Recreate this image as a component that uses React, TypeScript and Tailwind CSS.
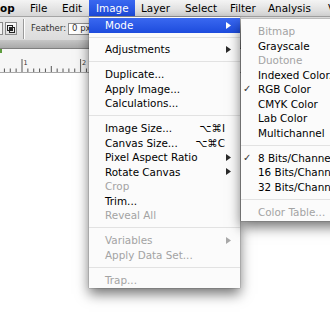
import React from 'react';

type Entry =
  | { sep: true; tall?: boolean }
  | {
      sep?: false;
      label: string;
      disabled?: boolean;
      sub?: boolean;
      shortcut?: string;
      active?: boolean;
      checked?: boolean;
    };

const imageMenu: Entry[] = [
  { label: 'Mode', sub: true, active: true },
  { sep: true },
  { label: 'Adjustments', sub: true },
  { sep: true, tall: true },
  { label: 'Duplicate...' },
  { label: 'Apply Image...' },
  { label: 'Calculations...' },
  { sep: true, tall: true },
  { label: 'Image Size...', shortcut: '⌥⌘I' },
  { label: 'Canvas Size...', shortcut: '⌥⌘C' },
  { label: 'Pixel Aspect Ratio', sub: true },
  { label: 'Rotate Canvas', sub: true },
  { label: 'Crop', disabled: true },
  { label: 'Trim...' },
  { label: 'Reveal All', disabled: true },
  { sep: true, tall: true },
  { label: 'Variables', sub: true, disabled: true },
  { label: 'Apply Data Set...', disabled: true },
  { sep: true, tall: true },
  { label: 'Trap...', disabled: true },
];

const modeMenu: Entry[] = [
  { label: 'Bitmap', disabled: true },
  { label: 'Grayscale' },
  { label: 'Duotone', disabled: true },
  { label: 'Indexed Color...' },
  { label: 'RGB Color', checked: true },
  { label: 'CMYK Color' },
  { label: 'Lab Color' },
  { label: 'Multichannel' },
  { sep: true, tall: true },
  { label: '8 Bits/Channel', checked: true },
  { label: '16 Bits/Channel' },
  { label: '32 Bits/Channel' },
  { sep: true, tall: true },
  { label: 'Color Table...', disabled: true },
];

const menuBar = [
  { label: 'op', box: 'w-[23px] pl-0 font-bold' },
  { label: 'File', box: 'w-[32px] pl-[7px]' },
  { label: 'Edit', box: 'w-[34px] pl-[7px]' },
  { label: 'Image', box: 'w-[46px] pl-[7px]', active: true },
  { label: 'Layer', box: 'w-[43px] pl-[6px]' },
  { label: 'Select', box: 'w-[45px] pl-[7px]' },
  { label: 'Filter', box: 'w-[38px] pl-[7px]' },
  { label: 'Analysis', box: 'w-[60px] pl-[7px]' },
  { label: 'View', box: 'w-[40px] pl-[7px]' },
];

function Arrow({ color }: { color: string }) {
  return (
    <svg width="5" height="7" viewBox="0 0 5 7" className="shrink-0">
      <path d="M0 0L5 3.5L0 7Z" fill={color} />
    </svg>
  );
}

function Separator({ tall }: { tall?: boolean }) {
  return (
    <div className={`flex items-center ${tall ? 'h-[10.5px]' : 'h-[9.5px]'}`}>
      <div className="h-px w-full bg-[#e2e2e2]" />
    </div>
  );
}

function ImageMenu() {
  return (
    <div className="absolute left-[89px] top-[17px] w-[151px] bg-[#fbfbfb] pt-px pb-px shadow-[0_6px_12px_rgba(0,0,0,0.55),0_0_1px_rgba(0,0,0,0.6)]">
      {imageMenu.map((e, i) =>
        e.sep ? (
          <Separator key={i} tall={e.tall} />
        ) : (
          <div
            key={i}
            className={`flex h-[14.5px] items-center pl-[16px] pr-[9px] ${
              e.active
                ? 'bg-gradient-to-b from-[#3a68f0] to-[#1d4bdd] text-white'
                : e.disabled
                  ? 'text-[#a3a3a3]'
                  : 'text-black'
            }`}
          >
            <span className="flex-1 whitespace-nowrap">{e.label}</span>
            {e.shortcut && <span className="mr-[6px] whitespace-nowrap">{e.shortcut}</span>}
            {e.sub && <Arrow color={e.active ? '#ffffff' : e.disabled ? '#a8a8a8' : '#2a2a2a'} />}
          </div>
        ),
      )}
    </div>
  );
}

function ModeMenu() {
  return (
    <div className="absolute left-[241px] top-[19px] w-[110px] bg-[#fbfbfb] pt-[5px] pb-[2px] shadow-[0_6px_12px_rgba(0,0,0,0.55),0_0_1px_rgba(0,0,0,0.6)]">
      {modeMenu.map((e, i) =>
        e.sep ? (
          <Separator key={i} tall={e.tall} />
        ) : (
          <div
            key={i}
            className={`flex h-[14.5px] items-center pl-[2px] ${
              e.disabled ? 'text-[#a3a3a3]' : 'text-black'
            }`}
          >
            <span className="w-[15px] text-[10px] text-[#333]">{e.checked ? '✓' : ''}</span>
            <span className="whitespace-nowrap">{e.label}</span>
          </div>
        ),
      )}
    </div>
  );
}

function Ruler() {
  const ticks = [];
  const step = 5.86;
  for (let i = -3; i <= 14; i++) {
    const x = 22 + i * step;
    const major = i % 10 === 0;
    const half = Math.abs(i % 10) === 5;
    const len = major ? 13 : half ? 6 : 3.5;
    ticks.push(
      <line key={i} x1={x} x2={x} y1={23 - len} y2={23} stroke="#555" strokeWidth="1" />,
    );
  }
  return (
    <div className="h-[24px] border-b border-[#a8a8a8] bg-[#f6f6f6]">
      <svg width="330" height="24" viewBox="0 0 330 24">
        {ticks}
        <text x="23.5" y="16" fontSize="6.5" fill="#333" fontFamily="DejaVu Sans">1</text>
        <text x="82" y="16" fontSize="6.5" fill="#333" fontFamily="DejaVu Sans">2</text>
      </svg>
    </div>
  );
}

export default function App() {
  return (
    <div className="relative h-[330px] w-[330px] overflow-hidden bg-white font-['DejaVu_Sans',sans-serif] text-[10.4px] leading-none">
      {/* menu bar */}
      <div className="flex h-[17px] items-stretch border-b border-[#a5a5a5] bg-gradient-to-b from-[#f4f4f4] to-[#d6d6d6] whitespace-nowrap">
        {menuBar.map((m) => (
          <div
            key={m.label}
            className={`flex shrink-0 items-center ${m.box} ${
              m.active ? 'bg-gradient-to-b from-[#3a68f0] to-[#1d4bdd] text-white' : 'text-black'
            }`}
          >
            {m.label}
          </div>
        ))}
      </div>

      {/* options bar */}
      <div className="flex h-[23px] items-center bg-gradient-to-b from-[#e9e9e9] to-[#dcdcdc] text-[8.5px] text-[#333]">
        <div className="h-[13px] w-[3px] border-y border-r border-[#8a8a8a] bg-[#f2f2f2]" />
        <div className="ml-[2px] flex h-[13px] w-[12px] items-center justify-center border border-[#8a8a8a] bg-gradient-to-b from-[#fafafa] to-[#dedede]">
          <svg width="8" height="8" viewBox="0 0 8 8">
            <rect x="0.5" y="0.5" width="5" height="5" fill="none" stroke="#222" />
            <rect x="2.5" y="2.5" width="5" height="5" fill="none" stroke="#222" />
            <rect x="2.5" y="2.5" width="3" height="3" fill="#222" />
          </svg>
        </div>
        <div className="ml-[6px] h-[20px] w-px bg-[#9a9a9a]" />
        <div className="h-[20px] w-px bg-white" />
        <span className="ml-[6px]">Feather:</span>
        <div className="ml-[2px] flex h-[12px] w-[40px] items-center border border-[#8c8c8c] bg-white pl-[3px]">
          0 px
        </div>
      </div>

      {/* document tab strip */}
      <div className="h-[9px] border-b border-[#7f7f7f] bg-gradient-to-b from-[#c6c6c6] to-[#a9a9a9]" />
      <div className="relative">
        <div className="absolute left-0 top-0 h-[4px] w-[2px] bg-[#5e9d3e]" />
        <Ruler />
      </div>

      <ImageMenu />
      <ModeMenu />
    </div>
  );
}
